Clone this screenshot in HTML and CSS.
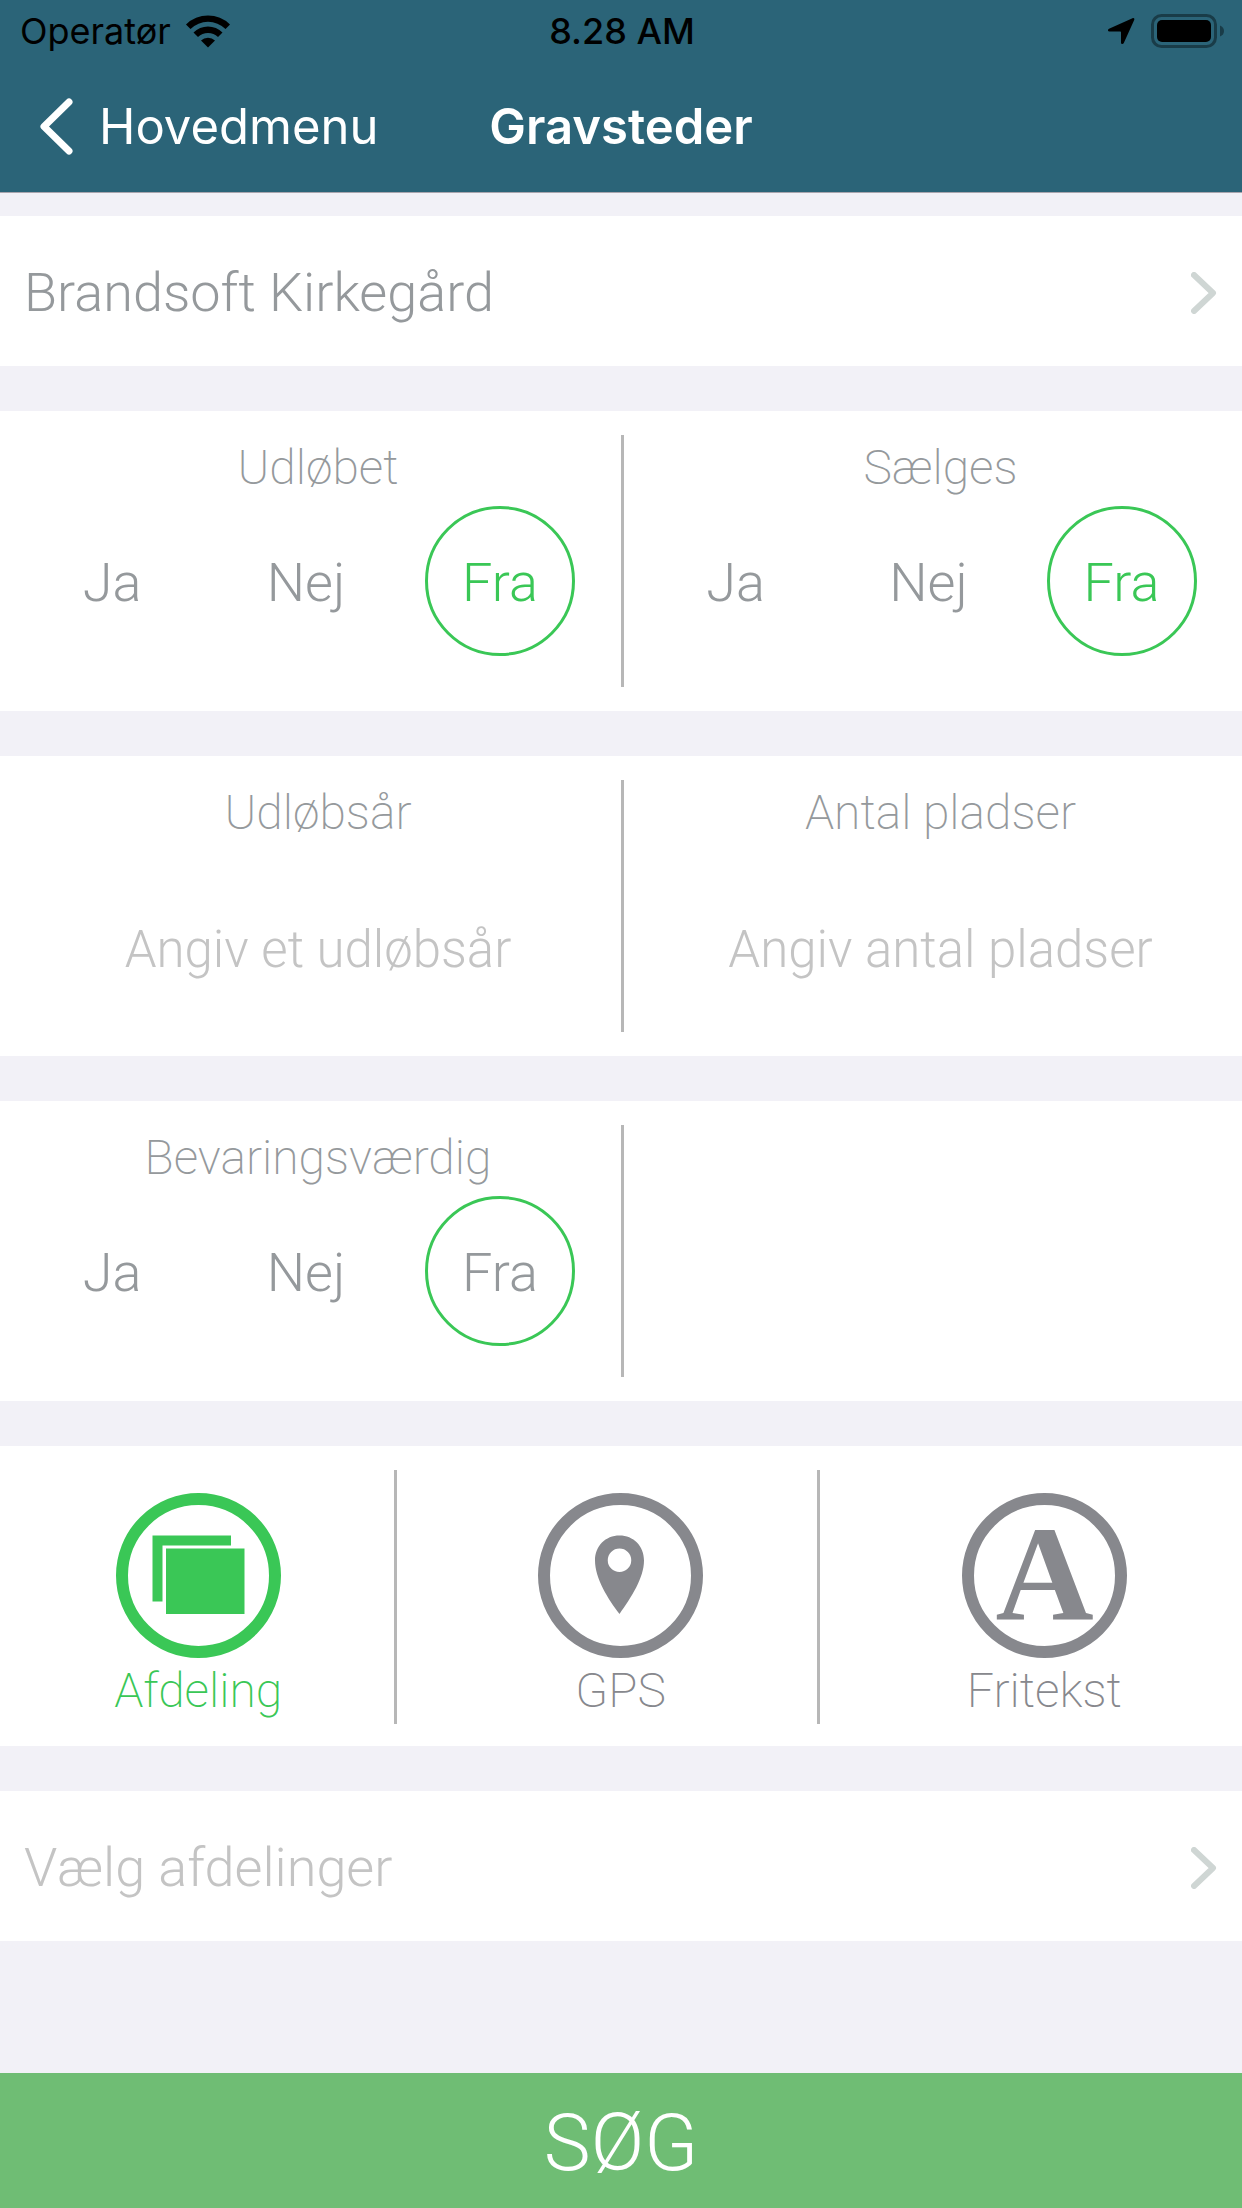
FILE: index.html
```html
<!DOCTYPE html>
<html lang="da">
<head>
    <meta charset="UTF-8">
    <meta name="viewport" content="width=device-width, initial-scale=1.0">
    <title>Gravsteder</title>
    <link rel="stylesheet" href="styles.css">
</head>
<body>
    <header class="header">
        <div class="status-bar">
            <div class="status-left">
                <span>Operatør</span>
                <svg class="wifi" viewBox="0 0 46 34" aria-hidden="true">
                    <path d="M1 10.500A31.500 31.500 0 0 1 45 10.500L40.500 15A25 25 0 0 0 5.500 15Z"/>
                    <path d="M8.500 18.500A20.500 20.500 0 0 1 37.500 18.500L33 23A14.500 14.500 0 0 0 13 23Z"/>
                    <path d="M16 26.500A10 10 0 0 1 30 26.500L23 33.500Z"/>
                </svg>
            </div>
            <span class="status-time">8.28 AM</span>
            <div class="status-right">
                <svg class="location" viewBox="0 0 28 28" aria-hidden="true">
                    <path d="M25.500 1.200C26.800.600 27.800 1.500 27.200 2.900L16.800 26C16.100 27.600 14 27.300 14 25.500V15.200Q14 14.500 13.300 14.500H2.500C.700 14.500.400 12.400 2 11.700Z"/>
                </svg>
                <svg class="battery" viewBox="0 0 73 34" aria-hidden="true">
                    <rect x="1.500" y="1.500" width="63" height="31" rx="9" fill="none" stroke="#000" stroke-width="3" opacity=".4"/>
                    <rect x="6" y="6" width="54" height="22" rx="5"/>
                    <path d="M69 11.500Q73 13 73 17T69 22.500Z" opacity=".4"/>
                </svg>
            </div>
        </div>
        <nav class="nav-bar">
            <a class="back" href="#">
                <svg class="back-icon" viewBox="0 0 33 57" aria-hidden="true">
                    <path d="M29 4L4 28.500L29 53"/>
                </svg>
                Hovedmenu
            </a>
            <h1 class="title">Gravsteder</h1>
        </nav>
    </header>

    <form class="search-form">
        <button type="button" class="row">
            Brandsoft Kirkegård
            <svg class="chevron" viewBox="0 0 26 42" aria-hidden="true"><path d="M3 3L22 21L3 39"/></svg>
        </button>

        <div class="card">
            <fieldset class="column">
                <legend class="label">Udløbet</legend>
                <div class="options">
                    <label class="option"><input type="radio" name="udloebet"><span>Ja</span></label>
                    <label class="option"><input type="radio" name="udloebet"><span>Nej</span></label>
                    <label class="option"><input type="radio" name="udloebet" checked><span>Fra</span></label>
                </div>
            </fieldset>
            <fieldset class="column">
                <legend class="label">Sælges</legend>
                <div class="options">
                    <label class="option"><input type="radio" name="saelges"><span>Ja</span></label>
                    <label class="option"><input type="radio" name="saelges"><span>Nej</span></label>
                    <label class="option"><input type="radio" name="saelges" checked><span>Fra</span></label>
                </div>
            </fieldset>
        </div>

        <div class="card">
            <div class="column">
                <label class="label" for="udloebsaar">Udløbsår</label>
                <input class="field" type="text" inputmode="numeric" id="udloebsaar" placeholder="Angiv et udløbsår">
            </div>
            <div class="column">
                <label class="label" for="antalPladser">Antal pladser</label>
                <input class="field" type="text" inputmode="numeric" id="antalPladser" placeholder="Angiv antal pladser">
            </div>
        </div>

        <div class="card">
            <fieldset class="column">
                <legend class="label">Bevaringsværdig</legend>
                <div class="options options-plain">
                    <label class="option"><input type="radio" name="bevaring"><span>Ja</span></label>
                    <label class="option"><input type="radio" name="bevaring"><span>Nej</span></label>
                    <label class="option"><input type="radio" name="bevaring" checked><span>Fra</span></label>
                </div>
            </fieldset>
            <div class="column"></div>
        </div>

        <div class="card tabs">
            <label class="tab">
                <input type="radio" name="metode" checked>
                <svg class="tab-icon" viewBox="0 0 165 165" aria-hidden="true">
                    <circle cx="82.500" cy="82.500" r="76.500"/>
                    <path d="M36.500 42.500H115V52.500H46.500V108.500H36.500Z"/>
                    <rect x="50" y="55.500" width="78.500" height="65.500"/>
                </svg>
                <span>Afdeling</span>
            </label>
            <label class="tab">
                <input type="radio" name="metode">
                <svg class="tab-icon" viewBox="0 0 165 165" aria-hidden="true">
                    <circle cx="82.500" cy="82.500" r="76.500"/>
                    <path fill-rule="evenodd" d="M81.500 42.500C95.500 42.500 106 53 106 67.500C106 85 93 104.500 81.500 121C70 106 57 85 57 67.500C57 53 67.500 42.500 81.500 42.500ZM81.500 55.500A11.700 11.700 0 1 0 81.500 79A11.700 11.700 0 1 0 81.500 55.500Z"/>
                </svg>
                <span>GPS</span>
            </label>
            <label class="tab">
                <input type="radio" name="metode">
                <svg class="tab-icon" viewBox="0 0 165 165" aria-hidden="true">
                    <circle cx="82.500" cy="82.500" r="76.500"/>
                    <text x="82.500" y="127" text-anchor="middle">A</text>
                </svg>
                <span>Fritekst</span>
            </label>
        </div>

        <button type="button" class="row row-empty">
            Vælg afdelinger
            <svg class="chevron" viewBox="0 0 26 42" aria-hidden="true"><path d="M3 3L22 21L3 39"/></svg>
        </button>

        <button type="submit" class="submit">SØG</button>
    </form>
</body>
</html>
```

FILE: styles.css
```css
* {
    box-sizing: border-box;
}

body {
    margin: 0;
    min-height: 100vh;
    display: flex;
    flex-direction: column;
    background-color: #f2f1f7;
    color: #95999c;
    font-family: Roboto, "Liberation Sans", sans-serif;
    font-size: 54px;
    font-weight: 300;
}

button,
input {
    font: inherit;
    color: inherit;
}

.header {
    background-color: #2b6478;
    border-bottom: 1px solid #a9a5ae;
    font-family: Inter, "Liberation Sans", sans-serif;
}

.status-bar {
    display: grid;
    grid-template-columns: 1fr auto 1fr;
    align-items: center;
    height: 60px;
    padding: 2px 18px 0 20px;
    color: #000;
    font-size: 36px;
    font-weight: 400;
}

.status-left,
.status-right {
    display: flex;
    align-items: center;
    gap: 14px;
}

.status-right {
    justify-content: flex-end;
    gap: 16px;
}

.status-time {
    font-weight: 500;
}

.wifi {
    width: 46px;
    height: 34px;
}

.location {
    width: 28px;
    height: 28px;
}

.battery {
    width: 73px;
    height: 34px;
}

.nav-bar {
    display: grid;
    grid-template-columns: 1fr auto 1fr;
    align-items: center;
    height: 132px;
    padding: 0 40px;
    color: #fff;
    font-size: 49px;
}

.back {
    display: flex;
    align-items: center;
    gap: 26px;
    color: #fff;
    font-weight: 400;
    text-decoration: none;
}

.back-icon {
    width: 33px;
    height: 57px;
    fill: none;
    stroke: #fff;
    stroke-width: 7;
    stroke-linecap: round;
    stroke-linejoin: round;
}

.title {
    margin: 0;
    font-size: 49px;
    font-weight: 600;
}

.search-form {
    flex: 1;
    display: flex;
    flex-direction: column;
    gap: 45px;
    padding-top: 23px;
}

.row {
    display: flex;
    justify-content: space-between;
    align-items: center;
    height: 150px;
    padding: 3px 25px 0 24px;
    border: none;
    background-color: #fff;
    text-align: left;
}

.row-empty {
    color: #c4c4c4;
}

.chevron {
    width: 26px;
    height: 42px;
    fill: none;
    stroke: #cfd6d4;
    stroke-width: 6;
    stroke-linecap: round;
    stroke-linejoin: round;
}

.card {
    display: grid;
    grid-template-columns: 1fr 1fr;
    height: 300px;
    padding: 24px 0;
    background-color: #fff;
}

.column {
    min-width: 0;
    margin: 0;
    padding: 0 0 0 15px;
    border: none;
}

.column + .column {
    border-left: 3px solid #b7b7b7;
}

/* floated so the legend does not cut the divider */
.label {
    float: left;
    width: 100%;
    padding: 0;
    margin-bottom: 5px;
    font-size: 48px;
    font-weight: 200;
    line-height: 66px;
    text-align: center;
}

.options {
    clear: both;
    display: grid;
    grid-template-columns: 1fr 1fr 1fr;
    padding-right: 24px;
}

.option {
    display: flex;
    justify-content: center;
}

.option input,
.tab input {
    position: absolute;
    opacity: 0;
}

.option span {
    display: flex;
    justify-content: center;
    align-items: center;
    width: 150px;
    height: 150px;
    padding-top: 3px;
    border: 3px solid transparent;
    border-radius: 50%;
}

.option input:checked + span {
    border-color: #3ac756;
    color: #3ac756;
}

.options-plain input:checked + span {
    color: inherit;
}

.field {
    width: 100%;
    height: 168px;
    margin-top: 13px;
    padding: 2px 0 0;
    border: none;
    background: none;
    font-size: 51px;
    text-align: center;
}

.field::placeholder {
    color: #c4c4c4;
    opacity: 1;
}

.tabs {
    grid-template-columns: 32fr 34fr 34fr;
}

.tab {
    display: flex;
    flex-direction: column;
    align-items: center;
    padding: 23px 0 0 2px;
    color: #87888d;
    font-size: 48px;
    font-weight: 200;
    line-height: 66px;
}

.tab:not(:last-child) {
    border-right: 3px solid #b7b7b7;
}

.tab + .tab {
    padding-left: 27px;
}

.tab:has(input:checked) {
    color: #3ac756;
}

.tab-icon {
    width: 165px;
    height: 165px;
    fill: currentColor;
}

.tab-icon circle {
    fill: none;
    stroke: currentColor;
    stroke-width: 12;
}

.tab-icon text {
    font-family: "Liberation Serif", serif;
    font-size: 136px;
    font-weight: 700;
}

.submit {
    height: 135px;
    margin-top: auto;
    padding-top: 6px;
    border: none;
    background-color: #6fbd74;
    color: #fff;
    font-size: 79px;
    font-weight: 300;
}
```
